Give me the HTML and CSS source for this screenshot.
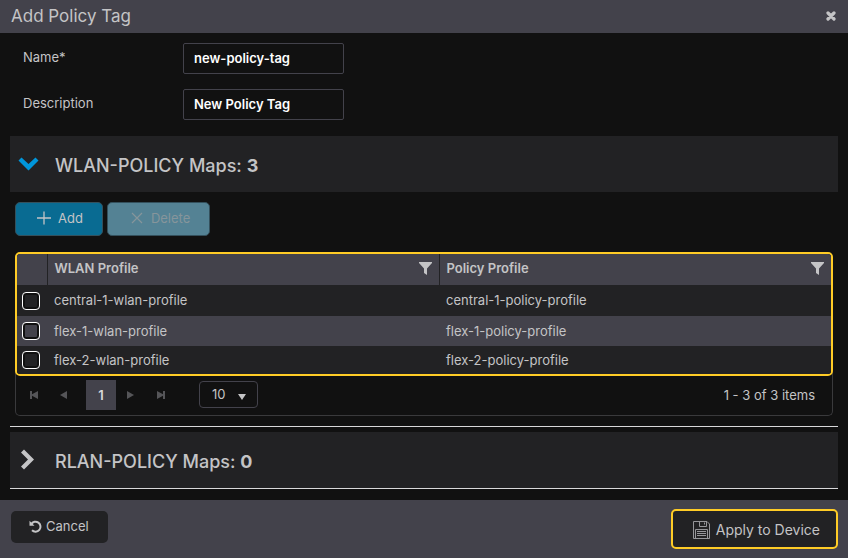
FILE: index.html
```html
<!DOCTYPE html>
<html lang="en">
<head>
<meta charset="utf-8">
<title>Add Policy Tag</title>
<link rel="stylesheet" href="styles.css">
</head>
<body>
<header class="titlebar">
  <h1>Add Policy Tag</h1>
  <button class="close" type="button" aria-label="Close">
    <svg width="10" height="10" viewBox="0 0 10 10"><path d="M2 2l6 6M8 2l-6 6" stroke="currentColor" stroke-width="3.2" stroke-linecap="round"/></svg>
  </button>
</header>
<main>
  <form class="fields">
    <label for="name">Name*</label>
    <input id="name" type="text" value="new-policy-tag">
    <label for="description">Description</label>
    <input id="description" type="text" value="New Policy Tag">
  </form>

  <button class="section" type="button" aria-expanded="true">
    <svg class="chevron open" width="22" height="22" viewBox="0 0 22 22"><path d="M.5 7.500l3-3L10.500 11l7-6.500 3 3L10.500 17.500z" fill="currentColor"/></svg>
    <span>WLAN-POLICY Maps: <b>3</b></span>
  </button>

  <section class="maps">
    <div class="toolbar">
      <button class="tool" type="button">
        <svg width="14" height="14" viewBox="0 0 14 14"><path d="M7 .5v13M0 7h14" stroke="currentColor" stroke-width="1.300"/></svg>Add
      </button>
      <button class="tool delete" type="button" disabled>
        <svg width="14" height="14" viewBox="0 0 14 14"><path d="M2 2l10 10M12 2L2 12" stroke="currentColor" stroke-width="1.200"/></svg>Delete
      </button>
    </div>

    <div class="grid">
      <div class="highlight">
        <table>
          <thead>
            <tr>
              <th class="pick"></th>
              <th><div class="head">WLAN Profile <svg width="13" height="13" viewBox="0 0 13 13"><path d="M0 0h13v1L8 6.500V13L5 11V6.500L0 1z" fill="currentColor"/></svg></div></th>
              <th><div class="head">Policy Profile <svg width="13" height="13" viewBox="0 0 13 13"><path d="M0 0h13v1L8 6.500V13L5 11V6.500L0 1z" fill="currentColor"/></svg></div></th>
            </tr>
          </thead>
          <tbody>
            <tr><td class="pick"><input type="checkbox" aria-label="Select central-1-wlan-profile"></td><td>central-1-wlan-profile</td><td>central-1-policy-profile</td></tr>
            <tr><td class="pick"><input type="checkbox" aria-label="Select flex-1-wlan-profile"></td><td>flex-1-wlan-profile</td><td>flex-1-policy-profile</td></tr>
            <tr><td class="pick"><input type="checkbox" aria-label="Select flex-2-wlan-profile"></td><td>flex-2-wlan-profile</td><td>flex-2-policy-profile</td></tr>
          </tbody>
        </table>
      </div>
      <div class="pager">
        <button type="button" aria-label="First page"><svg width="8" height="8" viewBox="0 0 8 8"><path d="M0 0h2v3.200L8 0v8L2 4.800V8H0z" fill="currentColor"/></svg></button>
        <button type="button" aria-label="Previous page"><svg width="8" height="8" viewBox="0 0 8 8"><path d="M7 0v8L0 4z" fill="currentColor"/></svg></button>
        <button type="button" class="current">1</button>
        <button type="button" aria-label="Next page"><svg width="8" height="8" viewBox="0 0 8 8"><path d="M0 0v8l7-4z" fill="currentColor"/></svg></button>
        <button type="button" aria-label="Last page"><svg width="8" height="8" viewBox="0 0 8 8"><path d="M8 0H6v3.200L0 0v8l6-3.200V8h2z" fill="currentColor"/></svg></button>
        <div class="size">
          <select aria-label="Items per page"><option>10</option><option>25</option><option>50</option></select>
          <svg width="8" height="6" viewBox="0 0 8 6"><path d="M0 0h8L4 6z" fill="currentColor"/></svg>
        </div>
        <span class="count">1 - 3 of 3 items</span>
      </div>
    </div>
  </section>

  <div class="closed">
    <button class="section" type="button" aria-expanded="false">
      <svg class="chevron" width="22" height="22" viewBox="0 0 22 22"><path d="M6 .5l-3 3 7 7-7 7 3 3 10-10z" fill="currentColor"/></svg>
      <span>RLAN-POLICY Maps: <b>0</b></span>
    </button>
  </div>
</main>
<footer>
  <button class="cancel" type="button">
    <svg width="13" height="13" viewBox="0 0 13 13"><path d="M2.200 4.200A5 5 0 1 1 3 10.300" fill="none" stroke="currentColor" stroke-width="2"/><path d="M.5.700v5h5z" fill="currentColor"/></svg>Cancel
  </button>
  <button class="apply" type="button">
    <svg width="17" height="18" viewBox="0 0 17 18" fill="none" stroke="currentColor"><path d="M.5.500h13.500l2.500 2.500v14.500H.5z"/><path d="M6.500.500v5h7v-5M11.500 1.500v2M2.500 17.500v-9h12v9M4 10.500h9M4 12.500h9M4 14.500h9"/></svg>Apply to Device
  </button>
</footer>
</body>
</html>
```

FILE: styles.css
```css
* { box-sizing: border-box; }
body {
  margin: 0;
  min-height: 100vh;
  display: flex;
  flex-direction: column;
  background: #111;
  color: #c4c4c6;
  font: 13px/20px Inter, "Liberation Sans", sans-serif;
}
button, input, select { font: inherit; color: inherit; margin: 0; }
button { display: flex; align-items: center; padding: 0; border: 0; background: none; }
svg { flex: none; }

.titlebar {
  display: flex;
  align-items: center;
  justify-content: space-between;
  height: 33px;
  padding: 0 12px 2px 11px;
  background: #43424b;
}
.titlebar h1 { margin: 0; font-size: 17px; font-weight: 400; }

main { flex: 1; padding: 10px 10px 11px; }
.fields {
  display: grid;
  grid-template-columns: 160px 161px;
  row-gap: 15px;
  padding-left: 13px;
  margin-bottom: 16px;
}
.fields label { padding-top: 4px; }
.fields input {
  width: 100%;
  height: 31px;
  padding: 0 10px 2px;
  border: 1px solid #43424b;
  border-radius: 2px;
  background: #111;
  color: #fff;
  font-weight: 600;
}

.section {
  width: 100%;
  height: 56px;
  gap: 15px;
  padding-left: 8px;
  background: #222224;
  font-size: 18px;
  font-weight: 500;
}
.section span { padding-top: 3px; }
.section b { font-weight: 700; }
.chevron { color: #c4c4c6; }
.chevron.open { color: #0096db; }

.maps { padding: 10px 5px; }
.toolbar { display: flex; gap: 4px; margin-bottom: 16px; }
.tool {
  height: 34px;
  gap: 7px;
  padding: 0 19px 2px 21px;
  border: 1px solid #34505c;
  border-radius: 5px;
  background: #096b92;
}
.tool.delete { padding-left: 22px; background: #548294; color: #86959b; }

.grid { border: 1px solid #3a3a3c; border-top: 0; border-radius: 5px; }
.highlight {
  margin: 0 -1px;
  border: 2px solid #ffcc26;
  border-radius: 5px;
  overflow: hidden;
}
table { width: 100%; border-collapse: collapse; table-layout: fixed; }
tr { height: 30px; background: #222224; }
thead tr, tbody tr:first-child { height: 31px; }
thead tr, tbody tr:nth-child(even) { background: #43424b; }
tbody tr:last-child { height: 28px; }
th, td { padding: 0 7px 1px; text-align: left; }
th { font-weight: 600; }
th + th { border-left: 1px solid #222224; }
.pick { width: 30px; padding: 0 5px; }
.head { display: flex; align-items: center; justify-content: space-between; padding-bottom: 2px; }
td input {
  appearance: none;
  display: block;
  width: 18px;
  height: 18px;
  border: 1px solid #fff;
  border-radius: 4px;
  box-shadow: inset 0 0 0 2px #111;
}

.pager { display: flex; align-items: center; height: 39px; padding: 0 17px 2px 3px; }
.pager button { width: 30px; height: 30px; justify-content: center; color: #555558; }
.pager .current { background: #43424b; color: #d8d8da; font-weight: 600; margin-left: 7px; }
.size { display: flex; align-items: center; position: relative; margin-left: 23px; }
.size select {
  appearance: none;
  width: 59px;
  height: 27px;
  padding: 0 12px 2px;
  border: 1px solid #43424b;
  border-radius: 4px;
  background: #111;
}
.size svg { position: absolute; right: 12px; top: 13px; pointer-events: none; }
.count { margin-left: auto; }

.closed { padding-top: 5px; border: solid #d8d8da; border-width: 1px 0; }

footer {
  display: flex;
  align-items: center;
  justify-content: space-between;
  height: 58px;
  padding: 0 10px 0 11px;
  background: #43424b;
}
.cancel, .apply { border-radius: 5px; background: #222224; }
.cancel { height: 32px; gap: 4px; padding: 0 19px 2px 18px; margin-bottom: 4px; }
.apply { height: 40px; gap: 6px; padding: 2px 16px 0 20px; border: 2px solid #ffcc26; font-size: 14px; }
.apply svg { color: #96969a; }
```
